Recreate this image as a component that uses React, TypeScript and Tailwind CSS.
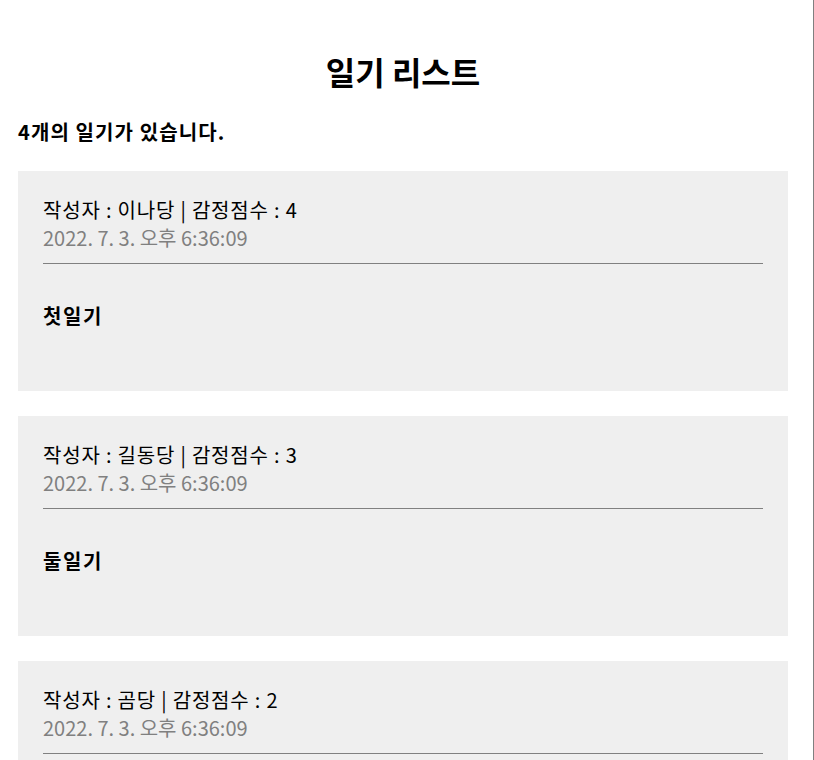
const diaries = [
  { author: "이나당", emotion: 4, content: "첫일기", date: "2022. 7. 3. 오후 6:36:09" },
  { author: "길동당", emotion: 3, content: "둘일기", date: "2022. 7. 3. 오후 6:36:09" },
  { author: "곰당", emotion: 2, content: "셋일기", date: "2022. 7. 3. 오후 6:36:09" },
  { author: "밤당", emotion: 5, content: "넷일기", date: "2022. 7. 3. 오후 6:36:09" },
];

const font = { fontFamily: '"Noto Sans CJK KR", "Noto Sans", sans-serif' };

const DiaryItem = ({ item }: { item: (typeof diaries)[number] }) => (
  <div className="bg-[#efefef] p-[25px] mb-[25px]">
    <div className="text-[20px] leading-[28px] tracking-[0.8px] text-black">
      작성자 : {item.author} | 감정점수 : {item.emotion}
    </div>
    <div className="text-[20px] leading-[28px] text-[#808080]">{item.date}</div>
    <div className="mt-[11px] border-t border-[#808080]" />
    <div className="mt-[38px] mb-[36px] text-[20px] leading-[28px] tracking-[1.6px] font-bold">{item.content}</div>
  </div>
);

export default function App() {
  return (
    <div className="min-h-screen w-[814px] border-r border-[#808080]" style={font}>
      <div className="pl-[18px] pr-[25px]">
        <h2 className="pt-[49px] text-center text-[32px] leading-[44px] font-bold text-black">일기 리스트</h2>
        <h4 className="mt-[25px] mb-[25px] text-[20px] leading-[28px] tracking-[1.1px] font-bold text-black">
          {diaries.length}개의 일기가 있습니다.
        </h4>
        <div>
          {diaries.map((d, i) => (
            <DiaryItem key={i} item={d} />
          ))}
        </div>
      </div>
    </div>
  );
}
